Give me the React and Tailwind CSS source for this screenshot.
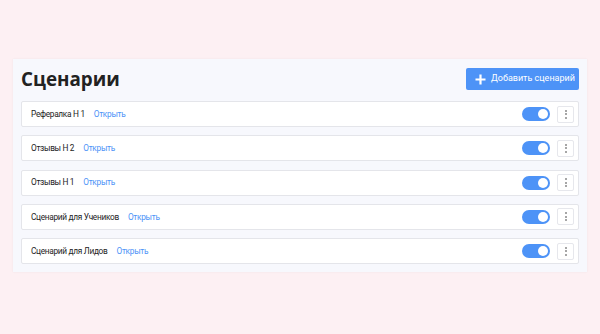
const scenarios = [
  { id: 1, name: "Рефералка Н 1" },
  { id: 2, name: "Отзывы Н 2" },
  { id: 3, name: "Отзывы Н 1" },
  { id: 4, name: "Сценарий для Учеников" },
  { id: 5, name: "Сценарий для Лидов" },
];

function Toggle() {
  return (
    <div className="flex h-[14px] w-[28px] items-center justify-end rounded-full bg-[#4d93f7] px-[2px]">
      <div className="h-[10px] w-[10px] rounded-full bg-white" />
    </div>
  );
}

function MenuButton() {
  return (
    <button className="flex h-[17px] w-[17px] flex-col items-center justify-center gap-[1.5px] rounded-[2px] border border-[#e6e7ec] bg-white">
      <span className="h-[2px] w-[2px] rounded-full bg-[#888]" />
      <span className="h-[2px] w-[2px] rounded-full bg-[#888]" />
      <span className="h-[2px] w-[2px] rounded-full bg-[#888]" />
    </button>
  );
}

export default function App() {
  return (
    <div className="h-[334px] w-[600px] bg-[#fdf0f3] pt-[59px] pl-[13px] font-['Roboto',sans-serif]">
      <section className="w-[574px] bg-[#f7f8fd] px-[8px] pt-[8px] pb-[8px] shadow-[0_0_2px_rgba(0,0,0,0.06)]">
        <div className="mb-[10px] flex items-center justify-between">
          <h1 className="font-['Open_Sans',sans-serif] text-[18.8px] font-bold leading-[24px] text-[#222]">Сценарии</h1>
          <button className="flex h-[22px] w-[113px] items-center gap-[5px] rounded-[2px] bg-[#4d93f7] pl-[9px] text-[9px] text-white">
            <svg width="11" height="11" viewBox="0 0 11 11">
              <path d="M5.5 0.5v10M0.5 5.5h10" stroke="white" strokeWidth="2.2" />
            </svg>
            Добавить сценарий
          </button>
        </div>
        <div className="flex flex-col gap-[8.3px]">
          {scenarios.map((s) => (
            <div
              key={s.id}
              className="flex h-[26px] items-center rounded-[2px] border border-[#e4e5ea] bg-white pl-[9px] pr-[4px] text-[8.3px] tracking-[-0.3px]"
            >
              <span className="text-[#1c1c1c]">{s.name}</span>
              <a className="ml-[9px] text-[#4d93f7]">Открыть</a>
              <div className="ml-auto flex items-center gap-[7px]">
                <Toggle />
                <MenuButton />
              </div>
            </div>
          ))}
        </div>
      </section>
    </div>
  );
}
